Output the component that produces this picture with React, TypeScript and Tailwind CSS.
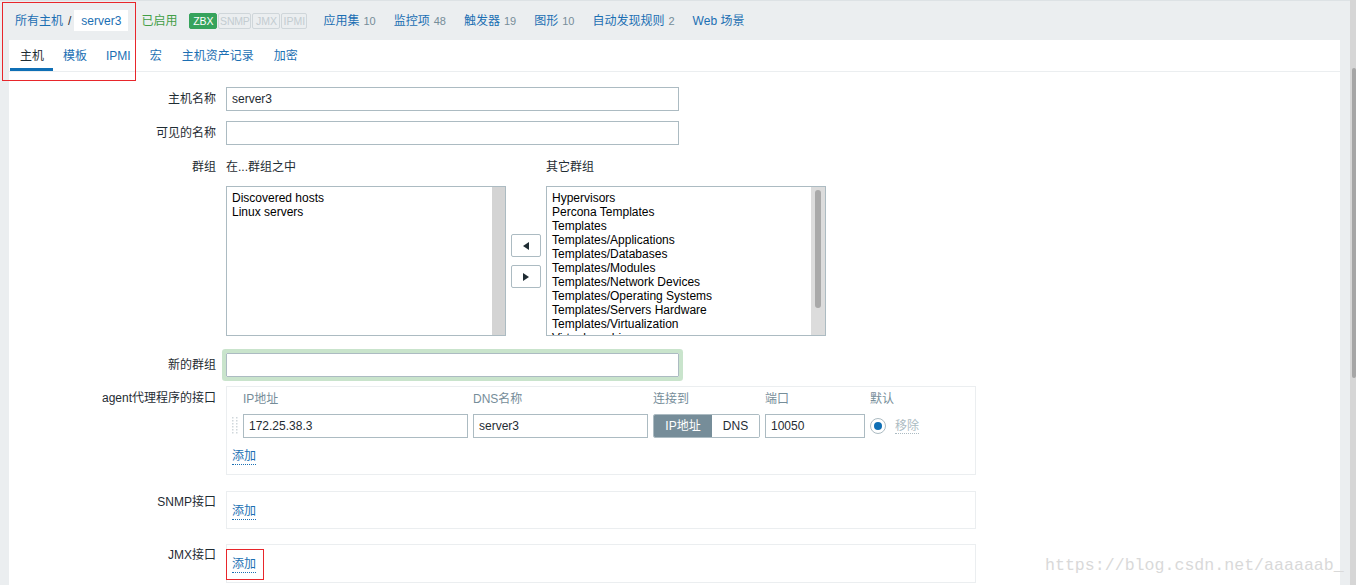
import React from "react";

const blue = "text-[#1b6fb3]";

function NavItem({ name, count }: { name: string; count?: string }) {
  return (
    <span className="whitespace-nowrap">
      <span className="text-[#1b6fb3]">{name}</span>
      {count && <span className="text-[#768d99] text-[11px] ml-[4px]">{count}</span>}
    </span>
  );
}

function AddLink() {
  return (
    <span className="text-[#1b6fb3] border-b border-dotted border-[#1b6fb3] leading-[14px] pb-[1px]">添加</span>
  );
}

const otherGroups = [
  "Hypervisors",
  "Percona Templates",
  "Templates",
  "Templates/Applications",
  "Templates/Databases",
  "Templates/Modules",
  "Templates/Network Devices",
  "Templates/Operating Systems",
  "Templates/Servers Hardware",
  "Templates/Virtualization",
  "Virtual machines",
];

export default function App() {
  return (
    <div className="relative w-[1356px] h-[585px] overflow-hidden bg-[#ebeef0] flex font-['Liberation_Sans','Noto_Sans_CJK_SC',sans-serif] text-[12px] text-[#1f2c33]">
      <div className="w-[1350px] flex flex-col">
        {/* top bar */}
        <div className="h-[40px] shrink-0 border-t border-[#dde2e5] flex items-center pl-[15px]">
          <span className={blue}>所有主机</span>
          <span className="ml-[5px] mr-[3px] text-[#1f2c33]">/</span>
          <span className="bg-white h-[21px] px-[7px] flex items-center text-[#1b6fb3]">server3</span>
          <span className="ml-[13px] text-[#429e47]">已启用</span>
          <div className="ml-[12px] flex gap-[1px] text-[10.5px] leading-[14px]">
            <span className="w-[28px] text-center bg-[#36a35c] border border-[#36a35c] text-white rounded-[2px]">ZBX</span>
            <span className="w-[33px] text-center border border-[#cfd6da] text-[#c3ccd1] rounded-[2px] tracking-[-0.2px]">SNMP</span>
            <span className="w-[28px] text-center border border-[#cfd6da] text-[#c3ccd1] rounded-[2px]">JMX</span>
            <span className="w-[26px] text-center border border-[#cfd6da] text-[#c3ccd1] rounded-[2px]">IPMI</span>
          </div>
          <div className="ml-[16px] flex gap-[18px]">
            <NavItem name="应用集" count="10" />
            <NavItem name="监控项" count="48" />
            <NavItem name="触发器" count="19" />
            <NavItem name="图形" count="10" />
            <NavItem name="自动发现规则" count="2" />
            <NavItem name="Web 场景" />
          </div>
        </div>

        {/* panel */}
        <div className="ml-[9px] mr-[10px] flex-1 bg-white flex flex-col">
          <div className="h-[32px] shrink-0 border-b border-[#ebeef0] flex pl-[1px]">
            <div className="pl-[10px] pr-[9px] flex items-center border-b-[3px] border-[#0f6fb5] pt-[3px] text-[#1f2c33]">主机</div>
            <div className="px-[10px] flex items-center text-[#1b6fb3]">模板</div>
            <div className="px-[9px] flex items-center text-[#1b6fb3]">IPMI</div>
            <div className="px-[10px] flex items-center text-[#1b6fb3]">宏</div>
            <div className="px-[10px] flex items-center text-[#1b6fb3]">主机资产记录</div>
            <div className="px-[10px] flex items-center text-[#1b6fb3]">加密</div>
          </div>

          <div className="flex flex-col pt-[15px]">
            {/* host name */}
            <div className="flex gap-[10px] items-center">
              <div className="w-[207px] text-right">主机名称</div>
              <div className="w-[453px] h-[24px] border border-[#acbbc2] flex items-center px-[5px]">server3</div>
            </div>
            {/* visible name */}
            <div className="flex gap-[10px] items-center mt-[10px]">
              <div className="w-[207px] text-right">可见的名称</div>
              <div className="w-[453px] h-[24px] border border-[#acbbc2]"></div>
            </div>
            {/* groups */}
            <div className="flex gap-[10px] mt-[15px]">
              <div className="w-[207px] text-right leading-[14px]">群组</div>
              <div className="flex flex-col">
                <div className="flex leading-[14px]">
                  <div className="w-[320px]">在...群组之中</div>
                  <div>其它群组</div>
                </div>
                <div className="flex mt-[12px]">
                  <div className="w-[280px] h-[150px] border border-[#acbbc2] flex">
                    <div className="flex-1 pl-[5px] pt-[4px] leading-[14px] text-black">
                      <div>Discovered hosts</div>
                      <div>Linux servers</div>
                    </div>
                    <div className="w-[13px] bg-[#d4d4d4]"></div>
                  </div>
                  <div className="w-[40px] flex flex-col items-center justify-center gap-[8px]">
                    <div className="w-[30px] h-[23px] border border-[#acbbc2] rounded-[2px] flex items-center justify-center">
                      <svg width="6" height="8" viewBox="0 0 6 8"><path d="M6 0 L0 4 L6 8 Z" fill="#1f2c33" /></svg>
                    </div>
                    <div className="w-[30px] h-[23px] border border-[#acbbc2] rounded-[2px] flex items-center justify-center">
                      <svg width="6" height="8" viewBox="0 0 6 8"><path d="M0 0 L6 4 L0 8 Z" fill="#1f2c33" /></svg>
                    </div>
                  </div>
                  <div className="w-[280px] h-[150px] border border-[#acbbc2] flex overflow-hidden">
                    <div className="flex-1 pl-[5px] pt-[4px] leading-[14px] text-black overflow-hidden">
                      {otherGroups.map((g) => (
                        <div key={g} className="whitespace-nowrap">{g}</div>
                      ))}
                    </div>
                    <div className="w-[14px] bg-[#dcdcdc] flex justify-center pt-[3px]">
                      <div className="w-[6px] h-[118px] rounded-[3px] bg-[#a9a9a9]"></div>
                    </div>
                  </div>
                </div>
              </div>
            </div>
            {/* new group */}
            <div className="flex gap-[10px] items-center mt-[17px]">
              <div className="w-[207px] text-right">新的群组</div>
              <div className="w-[453px] h-[24px] border border-[#acbbc2] shadow-[0_0_0_4px_#c9e4cc] rounded-[1px]"></div>
            </div>
            {/* agent interfaces */}
            <div className="flex gap-[10px] mt-[9px]">
              <div className="w-[207px] text-right pt-[5px] leading-[14px]">agent代理程序的接口</div>
              <div className="w-[750px] h-[89px] border border-[#ebeef0] pl-[5px] pt-[5px] flex flex-col">
                <div className="flex leading-[14px] text-[#768d99] pl-[11px]">
                  <div className="w-[230px]">IP地址</div>
                  <div className="w-[180px]">DNS名称</div>
                  <div className="w-[112px]">连接到</div>
                  <div className="w-[105px]">端口</div>
                  <div>默认</div>
                </div>
                <div className="flex items-center mt-[8px]">
                  <svg width="6" height="18" viewBox="0 0 6 18" className="mr-[5px]">
                    {[0, 1, 2, 3, 4, 5].map((r) => (
                      <g key={r}>
                        <rect x="0" y={r * 3} width="1.5" height="1.5" fill="#d0d7db" />
                        <rect x="4" y={r * 3} width="1.5" height="1.5" fill="#d0d7db" />
                      </g>
                    ))}
                  </svg>
                  <div className="w-[225px] h-[24px] border border-[#acbbc2] flex items-center px-[5px]">172.25.38.3</div>
                  <div className="ml-[5px] w-[175px] h-[24px] border border-[#acbbc2] flex items-center px-[5px]">server3</div>
                  <div className="ml-[5px] flex h-[24px] rounded-[2px] overflow-hidden border border-[#acbbc2]">
                    <div className="w-[58px] bg-[#768d99] text-white flex items-center justify-center">IP地址</div>
                    <div className="w-[47px] bg-white flex items-center justify-center">DNS</div>
                  </div>
                  <div className="ml-[5px] w-[100px] h-[24px] border border-[#acbbc2] flex items-center px-[5px]">10050</div>
                  <div className="ml-[5px] w-[16px] h-[16px] rounded-full border border-[#acbbc2] flex items-center justify-center">
                    <div className="w-[8px] h-[8px] rounded-full bg-[#0f6fb5]"></div>
                  </div>
                  <span className="ml-[9px] text-[#acbbc2] border-b border-dotted border-[#acbbc2] leading-[14px]">移除</span>
                </div>
                <div className="mt-[11px] flex">
                  <AddLink />
                </div>
              </div>
            </div>
            {/* SNMP */}
            <div className="flex gap-[10px] mt-[16px]">
              <div className="w-[207px] text-right pt-[4px] leading-[14px]">SNMP接口</div>
              <div className="w-[750px] h-[38px] border border-[#ebeef0] pl-[5px] pt-[12px] flex items-start">
                <AddLink />
              </div>
            </div>
            {/* JMX */}
            <div className="flex gap-[10px] mt-[15px]">
              <div className="w-[207px] text-right pt-[4px] leading-[14px]">JMX接口</div>
              <div className="relative w-[750px] h-[39px] border border-[#ebeef0] pl-[5px] pt-[12px] flex items-start">
                <AddLink />
                <div className="absolute left-[-1px] top-[4px] w-[38px] h-[31px] border border-[#e8262b]"></div>
              </div>
            </div>
          </div>
        </div>
      </div>
      {/* page scrollbar */}
      <div className="w-[6px] bg-[#d6d6d6] flex justify-end pt-[68px]">
        <div className="w-[4px] h-[310px] rounded-[2px] bg-[#a6a6a6]"></div>
      </div>

      {/* annotation box */}
      <div className="absolute left-[2px] top-[2px] w-[134px] h-[79px] border border-[#e8262b]"></div>
      {/* watermark */}
      <div className="absolute left-[1045px] top-[554px] font-['Liberation_Mono',monospace] text-[16.6px] text-[#d9d9d9] whitespace-nowrap">https://blog.csdn.net/aaaaaab_</div>
    </div>
  );
}
